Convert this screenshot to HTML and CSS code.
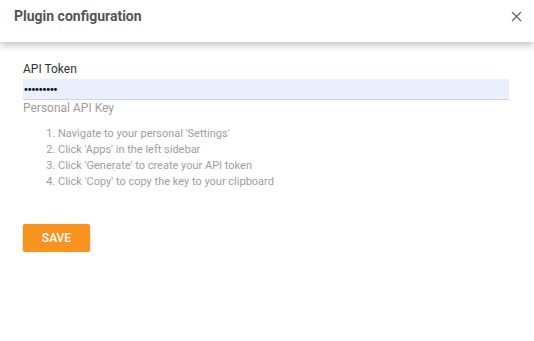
FILE: index.html
```html
<!DOCTYPE html>
<html lang="en">
<head>
  <meta charset="UTF-8" />
  <title>Plugin configuration</title>
  <link rel="stylesheet" href="styles.css">
</head>
<body>
  <div class="modal">
    <div class="modal-header">
      <h1>Plugin configuration</h1>
      <button class="close-btn" aria-label="Close">
        <svg width="11" height="11" viewBox="0 0 11 11"><path d="M1 1L10 10M10 1L1 10" stroke="#666" stroke-width="1.3" fill="none"/></svg>
      </button>
    </div>
    <div class="modal-body">
      <label class="field-label" for="token">API Token</label>
      <input id="token" class="field-input" type="password" value="secret123" />
      <div class="field-hint">Personal API Key</div>
      <ol class="steps">
        <li>Navigate to your personal 'Settings'</li>
        <li>Click 'Apps' in the left sidebar</li>
        <li>Click 'Generate' to create your API token</li>
        <li>Click 'Copy' to copy the key to your clipboard</li>
      </ol>
      <button class="save-btn">SAVE</button>
    </div>
  </div>
</body>
</html>
```

FILE: styles.css
```css
body {
  margin: 0;
  padding: 0;
  background: #fff;
  font-family: Roboto, "Liberation Sans", sans-serif;
}
.modal {
  width: 534px;
}
.modal-header {
  height: 42px;
  display: flex;
  align-items: center;
  justify-content: space-between;
  padding: 0 10px 0 14px;
  box-shadow: 0 3px 8px rgba(0,0,0,0.25);
  position: relative;
}
.modal-header h1 {
  margin: 0;
  margin-top: -10px;
  font-size: 14px;
  font-weight: 700;
  color: #555;
}
.close-btn {
  background: none;
  border: none;
  padding: 0;
  margin-top: -10px;
  width: 16px;
  height: 16px;
  display: flex;
  align-items: center;
  justify-content: center;
  cursor: pointer;
}
.modal-body {
  padding: 20px 25px 0 23px;
}
.field-label {
  display: block;
  font-size: 12px;
  color: #333;
  line-height: 14px;
  margin-bottom: 3px;
}
.field-input {
  display: block;
  width: 100%;
  box-sizing: border-box;
  height: 21px;
  border: none;
  border-bottom: 1px solid #d6d6d6;
  background: #e8f0fe;
  padding: 0;
  font-family: "DejaVu Sans", sans-serif;
  font-size: 10px;
  color: #111;
  letter-spacing: -2.2px;
  outline: none;
}
.field-hint {
  font-size: 12px;
  color: #9e9e9e;
  line-height: 14px;
  margin-top: 1px;
}
.steps {
  margin: 11px 0 0;
  padding-left: 35px;
  font-size: 11px;
  line-height: 16px;
  color: #9e9e9e;
}
.save-btn {
  margin-top: 34px;
  width: 67px;
  height: 28px;
  background: #f7931e;
  color: #fff;
  border: none;
  border-radius: 2px;
  font-family: Roboto, "Liberation Sans", sans-serif;
  font-size: 12px;
  font-weight: 500;
  box-shadow: 0 1px 3px rgba(0,0,0,0.25);
  cursor: pointer;
}
```
